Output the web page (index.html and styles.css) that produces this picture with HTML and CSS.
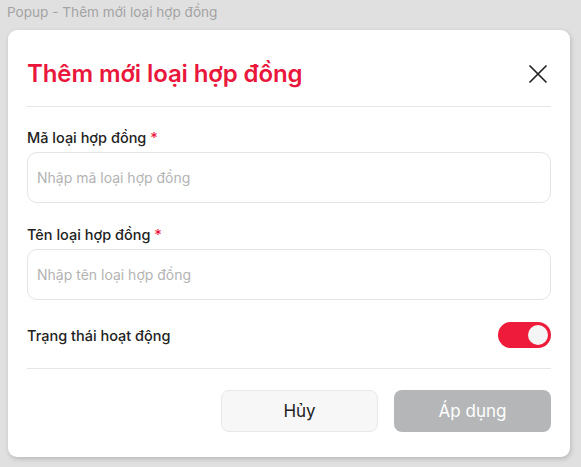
FILE: index.html
```html
<!DOCTYPE html>
<html lang="vi">
<head>
<meta charset="utf-8">
<title>Popup - Thêm mới loại hợp đồng</title>
<link rel="stylesheet" href="styles.css">
</head>
<body>
<div class="page-title">Popup - Thêm mới loại hợp đồng</div>
<div class="modal">
  <div class="modal-header">
    <h1 class="modal-title">Thêm mới loại hợp đồng</h1>
    <button class="close-btn" aria-label="Đóng">
      <svg width="18" height="18" viewBox="0 0 18 18"><path d="M1 1L17 17M17 1L1 17" stroke="#222" stroke-width="1.7" fill="none" stroke-linecap="round"/></svg>
    </button>
  </div>
  <div class="modal-body">
    <div class="field">
      <label class="field-label">Mã loại hợp đồng <span class="req">*</span></label>
      <input class="field-input" type="text" placeholder="Nhập mã loại hợp đồng">
    </div>
    <div class="field">
      <label class="field-label">Tên loại hợp đồng <span class="req">*</span></label>
      <input class="field-input" type="text" placeholder="Nhập tên loại hợp đồng">
    </div>
    <div class="toggle-row">
      <span class="toggle-label">Trạng thái hoạt động</span>
      <span class="toggle"><span class="knob"></span></span>
    </div>
  </div>
  <div class="modal-footer">
    <button class="btn btn-cancel">Hủy</button>
    <button class="btn btn-apply">Áp dụng</button>
  </div>
</div>
</body>
</html>
```
FILE: styles.css
```css
* { box-sizing: border-box; }
html, body { margin: 0; padding: 0; }
body {
  background: #e0e0e0;
  font-family: "Inter", "Noto Sans", sans-serif;
  color: #222;
  width: 581px;
  height: 467px;
  overflow: hidden;
}
.page-title {
  height: 30px;
  padding: 2px 0 0 7px;
  line-height: 20px;
  font-size: 13.6px;
  color: #a3a3a3;
}
.modal {
  margin-left: 8px;
  width: 562px;
  height: 427px;
  background: #fff;
  border-radius: 9px;
  box-shadow: 1px 2px 5px rgba(0,0,0,0.18);
  padding: 0 19px;
  display: flex;
  flex-direction: column;
}
.modal-header {
  height: 77px;
  border-bottom: 1px solid #e6e6e6;
  display: flex;
  align-items: center;
  justify-content: space-between;
  padding-top: 11px;
}
.modal-title {
  margin: 0;
  font-size: 24px;
  font-weight: 600;
  color: #e9173b;
  line-height: 32px;
  letter-spacing: -0.1px;
}
.close-btn {
  border: 0;
  background: none;
  padding: 0;
  margin-right: 3px;
  width: 20px;
  height: 20px;
  display: flex;
  align-items: center;
  justify-content: center;
}
.modal-body {
  padding-top: 21px;
  display: flex;
  flex-direction: column;
  gap: 22px;
}
.field {
  display: flex;
  flex-direction: column;
  gap: 4px;
}
.field-label {
  font-size: 14.5px;
  line-height: 20px;
  font-weight: 500;
  color: #222;
}
.req { color: #e9173b; }
.field-input {
  height: 51px;
  border: 1px solid #e4e4e4;
  border-radius: 10px;
  padding: 0 9px;
  font-family: inherit;
  font-size: 14px;
  color: #222;
  outline: none;
}
.field-input::placeholder { color: #b3b3b3; }
.toggle-row {
  display: flex;
  align-items: center;
  justify-content: space-between;
  height: 26px;
}
.toggle-label {
  font-size: 14.5px;
  font-weight: 500;
}
.toggle {
  width: 53px;
  height: 26px;
  border-radius: 13px;
  background: #ee1b3a;
  display: flex;
  align-items: center;
  justify-content: flex-end;
  padding-right: 3px;
}
.knob {
  width: 20px;
  height: 20px;
  border-radius: 50%;
  background: #f5f5f5;
}
.modal-footer {
  margin-top: 20px;
  border-top: 1px solid #e6e6e6;
  padding-top: 21px;
  display: flex;
  justify-content: flex-end;
  gap: 16px;
}
.btn {
  width: 157px;
  height: 42px;
  border-radius: 8px;
  font-family: inherit;
  font-size: 17px;
  font-weight: 400;
}
.btn-cancel {
  background: #f7f7f7;
  border: 1px solid #e8e8e8;
  color: #222;
}
.btn-apply {
  background: #b5b6b8;
  border: 0;
  color: #fff;
}
```
